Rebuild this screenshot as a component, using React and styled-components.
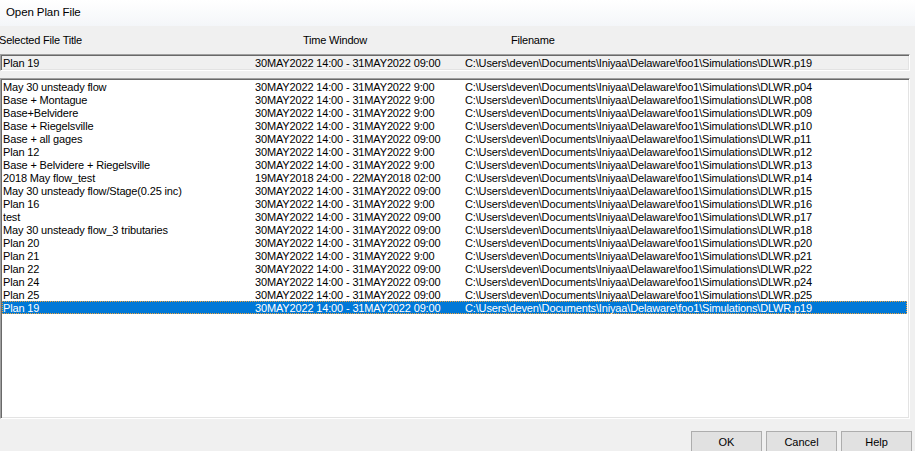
import React from "react";
import styled, { createGlobalStyle } from "styled-components";

const Global = createGlobalStyle`
  html, body { margin: 0; padding: 0; background: #f0f0f0; overflow: hidden; }
  * { box-sizing: border-box; }
`;

const Window = styled.div`
  width: 915px;
  height: 451px;
  display: flex;
  flex-direction: column;
  background: #f0f0f0;
  font-family: "Liberation Sans", Arial, sans-serif;
  color: #000;
  overflow: hidden;
`;

const TitleBar = styled.div`
  height: 26px;
  flex: none;
  display: flex;
  align-items: center;
  padding: 0 0 2px 6px;
  font-size: 11.5px;
  letter-spacing: -0.1px;
  background: linear-gradient(#ffffff, #f4f6f9);
`;

const HeaderRow = styled.div`
  height: 28px;
  flex: none;
  display: grid;
  grid-template-columns: 304px 208px 1fr;
  align-items: center;
  margin-left: -1px;
  padding-bottom: 1px;
  font-size: 11px;
  letter-spacing: -0.2px;
`;

const Sunken = styled.div`
  border: 1px solid;
  border-color: #a0a0a0 #ffffff #ffffff #a0a0a0;
  box-shadow: inset 1px 1px 0 #696969, inset -1px -1px 0 #e3e3e3;
  margin-right: 5px;
`;

const SelectedBox = styled(Sunken)`
  height: 17px;
  flex: none;
  background: #f0f0f0;
  padding: 1px 1px 1px 2px;
`;

const ListBox = styled(Sunken)`
  height: 341px;
  flex: none;
  margin-top: 7px;
  background: #ffffff;
  padding: 1px 2px 1px 1px;
  overflow: hidden;
`;

const Row = styled.div`
  height: 13px;
  display: grid;
  grid-template-columns: 252px 210px 1fr;
  align-items: center;
  padding-left: ${(p) => (p.$boxed ? "0" : "1px")};
  font-size: 11px;
  letter-spacing: -0.15px;
  white-space: nowrap;
  background: ${(p) => (p.$selected ? "#0078d7" : "transparent")};
  color: ${(p) => (p.$selected ? "#ffffff" : "#000000")};
  outline: ${(p) => (p.$selected ? "1px dotted #f0a23a" : "none")};
  outline-offset: -1px;
`;

const Cell = styled.span`
  overflow: hidden;
`;

const Footer = styled.div`
  flex: 1;
  display: flex;
  justify-content: flex-end;
  align-items: flex-start;
  gap: 4px;
  padding: 12px 3px 0 0;
`;

const Button = styled.button`
  width: 71px;
  height: 23px;
  flex: none;
  background: #e1e1e1;
  border: 1px solid #adadad;
  font-family: "Liberation Sans", Arial, sans-serif;
  font-size: 11px;
  color: #000;
  padding: 0 0 2px;
`;

const P = "C:\\Users\\deven\\Documents\\Iniyaa\\Delaware\\foo1\\Simulations\\DLWR.";
const T9 = "30MAY2022 14:00 - 31MAY2022 9:00";
const T09 = "30MAY2022 14:00 - 31MAY2022 09:00";

const rows = [
  ["May 30 unsteady flow", T9, "p04"],
  ["Base + Montague", T9, "p08"],
  ["Base+Belvidere", T9, "p09"],
  ["Base + Riegelsville", T9, "p10"],
  ["Base + all gages", T09, "p11"],
  ["Plan 12", T9, "p12"],
  ["Base + Belvidere + Riegelsville", T9, "p13"],
  ["2018 May flow_test", "19MAY2018 24:00 - 22MAY2018 02:00", "p14"],
  ["May 30 unsteady flow/Stage(0.25 inc)", T09, "p15"],
  ["Plan 16", T9, "p16"],
  ["test", T09, "p17"],
  ["May 30 unsteady flow_3 tributaries", T09, "p18"],
  ["Plan 20", T09, "p20"],
  ["Plan 21", T9, "p21"],
  ["Plan 22", T09, "p22"],
  ["Plan 24", T09, "p24"],
  ["Plan 25", T09, "p25"],
  ["Plan 19", T09, "p19"],
];

export default function App() {
  return (
    <>
      <Global />
      <Window>
        <TitleBar>Open Plan File</TitleBar>
        <HeaderRow>
          <span>Selected File Title</span>
          <span>Time Window</span>
          <span>Filename</span>
        </HeaderRow>
        <SelectedBox>
          <Row $boxed>
            <Cell>Plan 19</Cell>
            <Cell>{T09}</Cell>
            <Cell>{P + "p19"}</Cell>
          </Row>
        </SelectedBox>
        <ListBox>
          {rows.map(([title, time, ext], i) => (
            <Row key={i} $selected={i === rows.length - 1}>
              <Cell>{title}</Cell>
              <Cell>{time}</Cell>
              <Cell>{P + ext}</Cell>
            </Row>
          ))}
        </ListBox>
        <Footer>
          <Button>OK</Button>
          <Button>Cancel</Button>
          <Button>Help</Button>
        </Footer>
      </Window>
    </>
  );
}
